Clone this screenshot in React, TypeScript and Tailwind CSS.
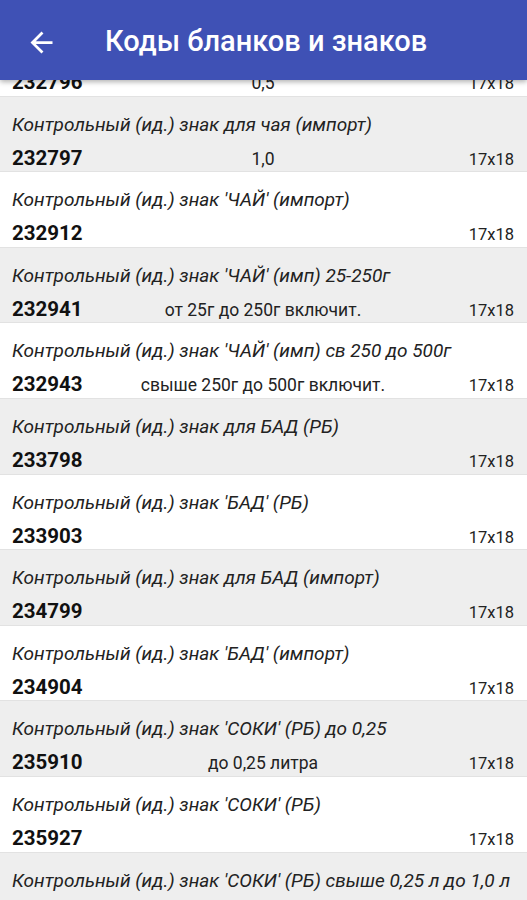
type Row = { title: string; code: string; note?: string; size: string };

const rows: Row[] = [
  { title: 'Контрольный (ид.) знак для чая (РБ)', code: '232796', note: '0,5', size: '17x18' },
  { title: 'Контрольный (ид.) знак для чая (импорт)', code: '232797', note: '1,0', size: '17x18' },
  { title: "Контрольный (ид.) знак 'ЧАЙ' (импорт)", code: '232912', size: '17x18' },
  { title: "Контрольный (ид.) знак 'ЧАЙ' (имп) 25-250г", code: '232941', note: 'от 25г до 250г включит.', size: '17x18' },
  { title: "Контрольный (ид.) знак 'ЧАЙ' (имп) св 250 до 500г", code: '232943', note: 'свыше 250г до 500г включит.', size: '17x18' },
  { title: 'Контрольный (ид.) знак для БАД (РБ)', code: '233798', size: '17x18' },
  { title: "Контрольный (ид.) знак 'БАД' (РБ)", code: '233903', size: '17x18' },
  { title: 'Контрольный (ид.) знак для БАД (импорт)', code: '234799', size: '17x18' },
  { title: "Контрольный (ид.) знак 'БАД' (импорт)", code: '234904', size: '17x18' },
  { title: "Контрольный (ид.) знак 'СОКИ' (РБ) до 0,25", code: '235910', note: 'до 0,25 литра', size: '17x18' },
  { title: "Контрольный (ид.) знак 'СОКИ' (РБ)", code: '235927', size: '17x18' },
  { title: "Контрольный (ид.) знак 'СОКИ' (РБ) свыше 0,25 л до 1,0 л", code: '235928', note: 'свыше 0,25 до 1,0 литра', size: '17x18' },
];

function CodeRow({ row, shaded }: { row: Row; shaded: boolean }) {
  return (
    <div
      className={`h-[75.6px] shrink-0 flex flex-col pl-3 pr-[13px] border-b border-[#e2e2e2] ${
        shaded ? 'bg-[#eeeeee]' : 'bg-white'
      }`}
    >
      <div className="pt-[17px] h-[39px] leading-[22px] text-[19px] italic text-[#222222] whitespace-nowrap">
        {row.title}
      </div>
      <div className="mt-[10px] grid grid-cols-[1fr_auto_1fr] items-baseline leading-[24px]">
        <span className="text-[20.5px] font-bold text-[#111111]">{row.code}</span>
        <span className="text-[17.5px] text-[#222222] text-center">{row.note ?? ''}</span>
        <span className="text-[16.5px] text-[#222222] text-right">{row.size}</span>
      </div>
    </div>
  );
}

export default function App() {
  return (
    <div className="w-[527px] h-[900px] overflow-hidden flex flex-col bg-white font-['Roboto',sans-serif]">
      <header className="relative z-10 h-[80px] shrink-0 bg-[#3f51b5] flex items-center pt-[4px] shadow-[0_2px_5px_rgba(0,0,0,0.3)]">
        <svg viewBox="0 0 24 24" className="ml-[25px] w-[33px] h-[33px] fill-white">
          <path d="M20 11H7.83l5.59-5.59L12 4l-8 8 8 8 1.41-1.41L7.83 13H20v-2z" />
        </svg>
        <h1 className="ml-[47px] text-[29px] font-medium text-white">Коды бланков и знаков</h1>
      </header>
      <div className="flex-1 overflow-hidden">
        <div className="-mt-[59px] flex flex-col">
          {rows.map((row, i) => (
            <CodeRow key={row.code} row={row} shaded={i % 2 === 1} />
          ))}
        </div>
      </div>
    </div>
  );
}
